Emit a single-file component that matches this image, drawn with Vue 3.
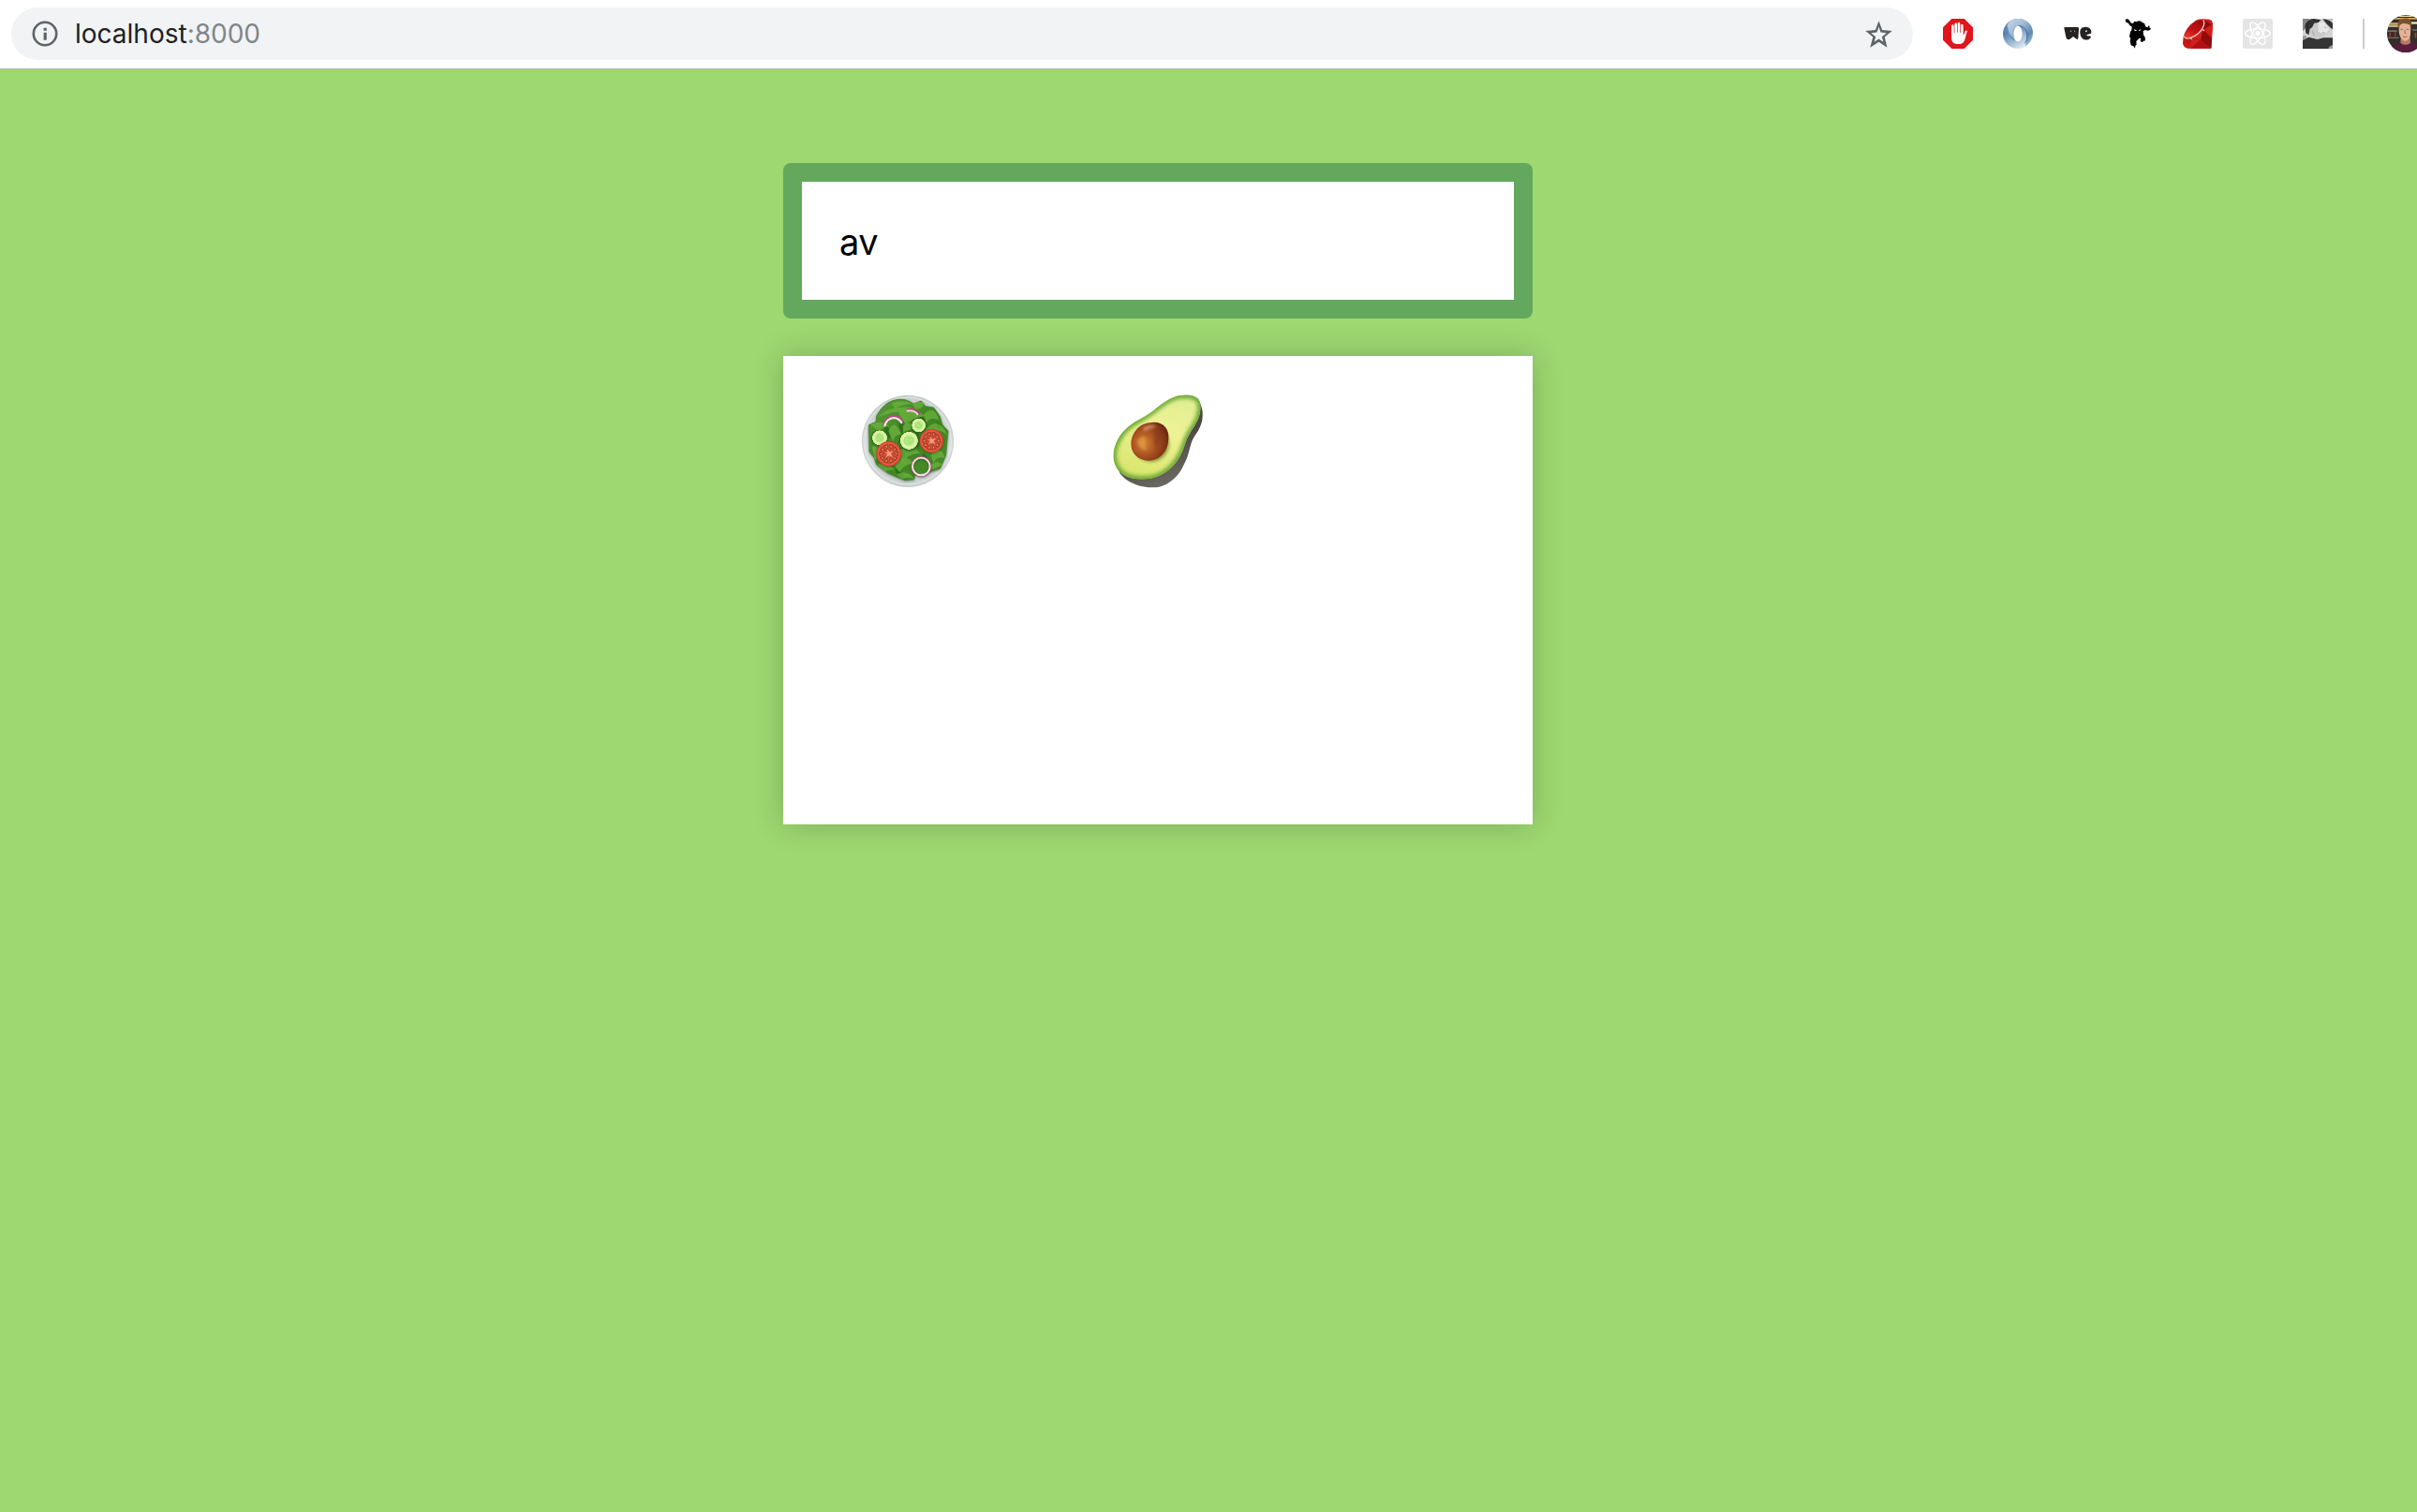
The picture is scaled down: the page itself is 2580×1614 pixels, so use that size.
<script setup>
import { ref } from 'vue'

const query = ref('av')
const leaves = [
  'M108 130Q135 82 177 79Q202 76 225 93L250 84L264 101L290 105L309 132L318 160L336 180L329 258L311 300L275 312L230 318L227 335L198 338L166 325L142 314L107 288L99 265L84 247L82 161L105 151Z',
]
const folds = [
  'M112 134Q150 98 220 105Q200 122 160 120Z',
  'M155 92Q185 76 224 94Q190 94 166 108Z',
  'M176 122Q215 98 262 132Q226 137 200 158Z',
  'M222 94Q244 80 260 92Q254 110 232 110Z',
  'M258 128Q292 92 306 145Q280 132 266 154Z',
  'M88 160Q120 143 148 165Q122 168 116 182Z',
  'M145 180Q165 134 186 194Q168 185 160 214Z',
  'M190 165Q215 140 235 176Q210 168 194 190Z',
  'M262 180Q302 126 335 194Q303 166 279 192Z',
  'M92 232Q112 214 124 270Q108 258 102 277Z',
  'M180 240Q222 222 246 252Q210 249 189 284Z',
  'M166 292Q200 245 228 286Q198 282 180 312Z',
  'M110 287Q143 282 164 303Q140 305 136 310Z',
  'M280 256Q318 226 326 267Q300 258 290 283Z',
  'M276 292Q302 270 318 288Q296 300 274 306Z',
  'M170 319Q206 303 226 332Q198 325 190 334Z',
]
const shades = [
  'M128 164Q150 150 150 206L133 190Z',
  'M188 144Q205 157 187 190L178 160Z',
  'M238 132Q276 135 262 160Q252 146 238 132Z',
  'M237 180Q252 198 240 236L229 214Z',
  'M180 232Q205 240 195 280L186 262Z',
  'M166 302Q180 300 194 328L171 319Z',
  'M252 252Q270 254 276 282L258 270Z',
  'M300 150Q315 160 316 174L300 170Z',
]
const tomatoes = [{ x: 146, y: 253, s: 1 }, { x: 283, y: 212, s: 0.95 }]
const cucumbers = [
  { x: 242, y: 162, r: 24 },
  { x: 117, y: 202, r: 26 },
  { x: 211, y: 211, r: 31 },
]
const seeds = [0, 36, 72, 108, 144, 180, 216, 252, 288, 324]
</script>

<template>
  <div class="browser">
    <header class="toolbar">
      <div class="address">
        <svg class="info" viewBox="0 0 28 28">
          <circle cx="14" cy="14" r="12.2" />
          <path d="M12.6 12.7h3.2v8h-3.2zM12.6 7.7h3.2v3h-3.2z" />
        </svg>
        <span class="url">localhost<span class="port">:8000</span></span>
        <svg class="star" viewBox="94 64 88 88">
          <path d="M138 65L149 94L181 97L157 117L165 151L138 133L110 151L119 117L95 97L127 94ZM138 84L132 102L113 104L128 116L123 133L138 123L153 133L148 116L163 104L144 102Z" fill-rule="evenodd" />
        </svg>
      </div>
      <div class="extensions">
        <svg viewBox="342 60 96 96">
          <path fill="#e1151c" d="M370 60H410L438 88V128L410 156H370L342 128V88Z" />
          <path fill="#fff" d="M369 84q0-5 4-5t4 5v21h2V78q0-5 4-5t4 5v26h2V76q0-5 4-5t4 5v29h2V82q0-5 4-5t4 5v31q3-2 4-8 2-9 8-7 1 1-1 7l-6 22q-4 14-18 14h-7q-18 0-18-20Z" />
        </svg>
        <svg viewBox="534 60 96 96">
          <defs>
            <linearGradient id="ringA" x1="0" y1="0" x2=".8" y2="1"><stop stop-color="#c9d9e8" /><stop offset=".4" stop-color="#a3bcd6" /><stop offset=".75" stop-color="#5f88b3" /><stop offset="1" stop-color="#9fb9d3" /></linearGradient>
            <linearGradient id="ringB" x1="0" y1="0" x2=".6" y2="1"><stop stop-color="#7697bb" /><stop offset=".4" stop-color="#5580ae" /><stop offset=".75" stop-color="#a8c1d9" /><stop offset="1" stop-color="#e0eaf3" /></linearGradient>
          </defs>
          <circle cx="582" cy="108" r="48" fill="url(#ringB)" />
          <path fill="url(#ringA)" d="M556 68C577 54 609 58 623 80C636 102 630 130 606 149C614 120 609 88 588 83C571 80 560 98 570 128C545 112 540 84 556 68Z" />
          <path fill="none" stroke="#477199" stroke-width="3" d="M586 82C600 84 611 96 612 112C612 122 609 132 604 139M571 129C560 120 549 106 548 86" />
          <ellipse cx="582" cy="108" rx="14" ry="25" fill="#fff" />
        </svg>
        <svg viewBox="726 60 96 96" fill="#252222">
          <path d="M730 91Q728 87 735 87H773Q779 88 777 95L775 122Q774 129 768 124L759 117L749 125Q740 129 737 122Z" />
          <path d="M799 86C782 86 779 98 782 111C784 127 803 133 814 122Q818 117 813 115Q805 117 801 112L816 107C820 98 814 86 799 86Z" />
          <path fill="#fff" d="M750 98l2 5 2-5zM762 98l1 5 2-5zM798 102q0-5 4-5 4 3-1 6z" />
        </svg>
        <svg viewBox="18 60 96 96">
          <path d="M26 63Q32 58 39 65L45 74L52 74L54 68L62 70Q72 63 81 72L88 76L90 85L97 88L101 82L104 84L103 89L108 90L105 96L98 98L90 96L83 99L84 112L89 119L90 130L84 131L80 136L74 131L76 123L71 122L61 132L62 143L58 146L57 155L52 148L44 145L41 133L43 124L39 117L42 102L46 97L47 86L39 80L36 74L28 71Z" />
          <path d="M54 94l8 3-1 2-6-1zM76 94l-8 3 2 2 5-2z" fill="#fff" />
        </svg>
        <svg viewBox="210 60 96 96">
          <defs>
            <linearGradient id="ruby" x1="1" y1="0" x2=".2" y2="1"><stop stop-color="#d5201c" /><stop offset=".5" stop-color="#ae1013" /><stop offset="1" stop-color="#c91816" /></linearGradient>
            <linearGradient id="gem" x1=".8" y1="0" x2=".2" y2="1"><stop stop-color="#9d0a0d" /><stop offset=".6" stop-color="#c21415" /><stop offset="1" stop-color="#e6382f" /></linearGradient>
          </defs>
          <path fill="url(#ruby)" d="M252 65Q266 58 296 62Q307 66 306 78L301 155H226Q212 153 210 139L212 117Q220 87 252 65Z" />
          <path fill="#930a0d" d="M275 96L303 122L301 155L267 127ZM279 65L303 78L277 94Z" />
          <path fill="#cf211c" d="M275 96L267 127L240 121ZM232 155L240 122L264 130ZM306 79L303 121L278 94Z" />
          <path fill="#b01013" d="M265 130L299 155H234Z" />
          <path fill="url(#gem)" d="M217 116C217 93 245 66 270 65C280 67 276 86 264 101C249 119 223 128 217 116Z" />
          <path fill="none" stroke="#f3d3cf" stroke-width="3.6" d="M214 115C218 130 244 122 262 105C276 91 283 73 275 64M271 94L279 99M238 120L237 127" />
        </svg>
        <svg viewBox="402 60 96 96">
          <rect x="402" y="60" width="96" height="96" rx="7" fill="#e5e5e5" />
          <g fill="none" stroke="#fff" stroke-width="4">
            <ellipse cx="450" cy="107" rx="40" ry="15" />
            <ellipse cx="450" cy="107" rx="40" ry="15" transform="rotate(60 450 107)" />
            <ellipse cx="450" cy="107" rx="40" ry="15" transform="rotate(120 450 107)" />
          </g>
          <circle cx="450" cy="107" r="8" fill="#fff" />
        </svg>
        <svg viewBox="594 60 96 96">
          <defs><filter id="soften"><feGaussianBlur stdDeviation="1.6" /></filter></defs>
          <path fill="#d4d4d4" d="M594 60h96v96h-96z" />
          <g filter="url(#soften)">
            <path fill="#858585" d="M590 56h27l-14 34-13 14z" />
            <path fill="#b8b8b8" d="M660 56h34v14l-14-8z" />
            <path fill="#c9c9c9" d="M614 90L640 70L664 66L684 97L668 111L654 121L622 122Z" />
            <path fill="#e6e6e6" d="M644 72L663 70L680 96L664 110L644 102Z" />
            <path fill="#303030" d="M601 84Q606 61 630 60L652 64L644 72L631 74L624 88L617 92L613 112L604 106Z" />
            <path fill="#303030" d="M658 61Q684 62 694 80V97Q676 86 658 61Z" />
            <path fill="#353535" d="M590 130L614 119L641 126L661 121L694 121V143L675 158H590Z" />
            <path fill="#9a9a9a" d="M590 116l14-3 3 10-17 8zM678 150l16-8v18h-18z" />
            <path fill="none" stroke="#8a8a8a" stroke-width="2" d="M664 84l4 7M656 104l10 2M625 100l6 14" />
          </g>
        </svg>
      </div>
      <div class="divider"></div>
      <svg class="avatar" viewBox="864 48 120 120">
        <defs><clipPath id="face"><circle cx="924" cy="108" r="60" /></clipPath></defs>
        <g clip-path="url(#face)">
          <path fill="#332e29" d="M864 48h120v120H864z" />
          <path fill="#d4a767" d="M880 57h80v5h-87zM871 73h34v7h-38z" />
          <path fill="#eed9ae" d="M890 50h65v4h-69zM870 82h30v4h-32zM941 70h43v7h-43z" />
          <path fill="#71716b" d="M864 97h32v5h-32zM868 119h34v4h-34zM945 94h40v4h-40z" />
          <path fill="#a34135" d="M872 104h4v14h-4zM888 103h4v15h-4zM953 105h5v16h-5z" />
          <path fill="#b67a63" d="M908 116L938 119L940 144L925 153L907 138Z" />
          <path fill="#591c3d" d="M877 149L907 137Q922 150 939 137L974 150V168H880Z" />
          <path fill="#e4b397" d="M901 83Q920 65 940 81L939 111Q936 128 922 132Q907 126 903 108Z" />
          <path fill="#80502f" d="M900 91Q893 64 912 61Q940 52 943 78L940 94L936 78L916 74L904 79L903 96Z" />
          <path fill="none" stroke="#7d5039" stroke-width="2" d="M907 94h8M926 94h9M921 96v11h4" />
          <path fill="none" stroke="#a94e48" stroke-width="2.5" d="M915 117q8 4 14 0" />
        </g>
      </svg>
    </header>

    <main class="page">
      <input v-model="query" class="search" type="text" spellcheck="false" />
      <section class="results">
        <div class="result">
          <svg class="food" viewBox="57 63 300 300">
            <defs>
              <linearGradient id="bowl" x1="0" y1="0" x2="0" y2="1"><stop stop-color="#c8cfce" /><stop offset=".6" stop-color="#dce1e0" /><stop offset="1" stop-color="#cbd2d0" /></linearGradient>
              <linearGradient id="leaf" x1="0" y1="0" x2="1" y2="1"><stop stop-color="#5a9c36" /><stop offset=".5" stop-color="#3f8522" /><stop offset="1" stop-color="#4c8c2a" /></linearGradient>
              <radialGradient id="cucumber"><stop stop-color="#afe37b" /><stop offset=".55" stop-color="#bced89" /><stop offset=".65" stop-color="#e2f5aa" /><stop offset=".89" stop-color="#d4ed98" /><stop offset=".93" stop-color="#2f6a22" /></radialGradient>
              <radialGradient id="tomato"><stop stop-color="#ea7a58" /><stop offset=".3" stop-color="#c4432f" /><stop offset=".75" stop-color="#b03a26" /><stop offset=".82" stop-color="#e9614b" /><stop offset="1" stop-color="#d23a2c" /></radialGradient>
              <filter id="blur1"><feGaussianBlur stdDeviation="2" /></filter>
              <filter id="drop" x="-20%" y="-20%" width="140%" height="140%"><feDropShadow dx="0" dy="3" stdDeviation="3" flood-color="#173e0c" flood-opacity=".5" /></filter>
            </defs>
            <circle cx="207" cy="213" r="146" fill="url(#bowl)" stroke="#b9c3c0" stroke-width="2" />
            <circle cx="207" cy="212" r="139" fill="none" stroke="#e4e8e7" stroke-width="3" />
            <g filter="url(#drop)"><path v-for="d in leaves" :key="d" :d="d" fill="url(#leaf)" stroke="#3d7b25" stroke-width="2" stroke-linejoin="round" /></g>
            <g filter="url(#blur1)">
              <path v-for="d in shades" :key="d" :d="d" fill="#28691a" opacity=".8" />
              <path v-for="d in folds" :key="d" :d="d" fill="#6db43f" opacity=".7" />
            </g>
            <path d="M204 112Q232 107 245 128" fill="none" stroke="#b6467b" stroke-width="7" />
            <path d="M203 116Q230 112 240 129" fill="none" stroke="#f5dfe6" stroke-width="5" />
            <path d="M130 164Q135 135 163 133Q184 135 190 154" fill="none" stroke="#b84a7c" stroke-width="8" />
            <path d="M132 166Q139 139 163 138Q181 140 188 156" fill="none" stroke="#f8edf0" stroke-width="6" />
            <circle v-for="c in cucumbers" :key="c.x" :cx="c.x" :cy="c.y" :r="c.r" fill="url(#cucumber)" filter="url(#drop)" />
            <g fill="none" stroke="#7fcf68" stroke-width="2" opacity=".7"><path d="M198 203q8-11 14 1 12-6 13 7-5 12-15 8-12 7-15-6zM109 195q8-9 13 1 9 5 3 12-10 9-17 0zM234 156q8-8 12 1 8 5 2 11-8 7-15-1z" /></g>
            <g v-for="t in tomatoes" :key="t.x" :transform="`translate(${t.x} ${t.y}) scale(${t.s})`" filter="url(#drop)">
              <circle r="40" fill="url(#tomato)" />
              <g v-for="a in seeds" :key="a" :transform="`rotate(${a})`">
                <ellipse cx="24" cy="0" rx="3.4" ry="2" fill="#e5a648" />
                <path d="M7 3L31 10" stroke="#da6f50" stroke-width="1.6" />
              </g>
              <path d="M-15-5L-3 0-12 13 2 5 15 13 6 0 17-10 2-5-5-15-4-4Z" fill="#f2a080" />
            </g>
            <g fill="none" filter="url(#drop)">
              <circle cx="250" cy="294" r="31" stroke="#b54378" stroke-width="4" />
              <circle cx="250" cy="294" r="28" stroke="#f3e7e7" stroke-width="5.5" />
            </g>
          </svg>
        </div>
        <div class="result avocado">
          <svg class="food" viewBox="51 63 300 300">
            <defs>
              <linearGradient id="skin" x1=".2" y1="0" x2=".6" y2="1"><stop stop-color="#478722" /><stop offset=".5" stop-color="#4a463e" /><stop offset="1" stop-color="#6d6b63" /></linearGradient>
              <linearGradient id="flesh" x1=".7" y1="0" x2=".3" y2="1"><stop stop-color="#dfee94" /><stop offset=".4" stop-color="#eff294" /><stop offset="1" stop-color="#d5e468" /></linearGradient>
              <radialGradient id="pit" cx=".35" cy=".55" r=".68"><stop stop-color="#cf8138" /><stop offset=".5" stop-color="#a94f20" /><stop offset="1" stop-color="#6c280d" /></radialGradient>
              <clipPath id="cut"><path d="M250 71C272 63 305 64 320 73C336 84 338 108 330 133C319 167 297 183 286 219C272 265 250 298 212 319C175 340 112 341 81 316C55 294 48 257 64 219C78 186 102 162 137 144C188 119 207 87 250 71Z" /></clipPath>
              <filter id="blur2" x="-20%" y="-20%" width="140%" height="140%"><feGaussianBlur stdDeviation="7" /></filter>
              <filter id="blur3" x="-20%" y="-20%" width="140%" height="140%"><feGaussianBlur stdDeviation="4" /></filter>
            </defs>
            <path fill="url(#skin)" d="M256 71C294 60 324 66 332 86L340 111C344 143 338 165 316 196C297 225 301 255 280 290C264 326 233 353 199 360C155 365 105 352 78 318C53 280 57 220 115 174Z" />
            <g clip-path="url(#cut)">
              <path fill="url(#flesh)" d="M50 60h300v290H50z" />
              <path fill="none" stroke="#6aa935" stroke-width="20" filter="url(#blur2)" d="M250 71C272 63 305 64 320 73C336 84 338 108 330 133C319 167 297 183 286 219C272 265 250 298 212 319C175 340 112 341 81 316C55 294 48 257 64 219C78 186 102 162 137 144C188 119 207 87 250 71Z" />
            </g>
            <ellipse cx="176" cy="220" rx="59" ry="60" fill="#68751c" opacity=".6" filter="url(#blur3)" />
            <path fill="url(#pit)" d="M179 153C215 149 235 175 232 204C231 242 209 273 170 275C137 276 111 253 112 220C114 186 138 154 179 153Z" />
            <g filter="url(#blur3)">
              <path fill="#e3a57e" opacity=".65" d="M151 169Q175 153 194 165Q176 174 151 182Z" />
              <path fill="#e9a544" opacity=".6" d="M132 211Q148 189 161 205Q152 222 163 243Q139 245 132 211Z" />
              <path fill="#7a3313" opacity=".45" d="M188 178Q211 177 212 205Q194 223 202 243Q177 226 188 178Z" />
            </g>
          </svg>
        </div>
      </section>
    </main>
  </div>
</template>

<style>
body { margin: 0; background: #9dd870; }
</style>

<style scoped>
.browser { min-height: 1614px; background: #9dd870; font-family: Inter, "Liberation Sans", sans-serif; overflow: hidden; }
.toolbar { display: flex; align-items: center; box-sizing: border-box; width: 2588px; height: 74px; padding: 0 0 1px 12px; background: #fff; border-bottom: 1px solid #b4b7b2; }
.address { display: flex; align-items: center; box-sizing: border-box; flex: none; width: 2030px; height: 56px; padding: 0 22px 0 22px; border-radius: 28px; background: #f1f3f4; }
.info { width: 28px; height: 28px; fill: #5f6368; }
.info circle { fill: none; stroke: #5f6368; stroke-width: 2.6; }
.url { margin-left: 18px; flex: 1; color: #202124; font-size: 28px; line-height: 56px; letter-spacing: 0; }
.port { color: #80868b; }
.star { width: 29px; height: 29px; fill: #5f6368; }
.extensions { display: flex; gap: 32px; margin-left: 32px; }
.extensions svg { width: 32px; height: 32px; flex: none; }
.divider { width: 2px; height: 32px; margin-left: 32px; background: #ccc; flex: none; }
.avatar { width: 40px; height: 40px; margin-left: 24px; flex: none; }
.page { display: flex; flex-direction: column; gap: 40px; width: 800px; margin: 100px 0 0 836px; }
.search { box-sizing: border-box; width: 800px; height: 166px; padding: 1px 40px 0; border: 20px solid #63a85d; border-radius: 8px; outline: none; background: #fff; color: #000; font: 400 38px Inter, sans-serif; letter-spacing: -.5px; }
.results { display: grid; grid-template-columns: repeat(3, 1fr); align-content: start; box-sizing: border-box; height: 500px; padding-top: 41px; background: #fff; box-shadow: 0 0 32px rgba(0, 0, 0, .2); }
.result { display: flex; justify-content: center; }
.avocado { padding-left: 2px; }
.food { width: 100px; height: 100px; }
</style>
